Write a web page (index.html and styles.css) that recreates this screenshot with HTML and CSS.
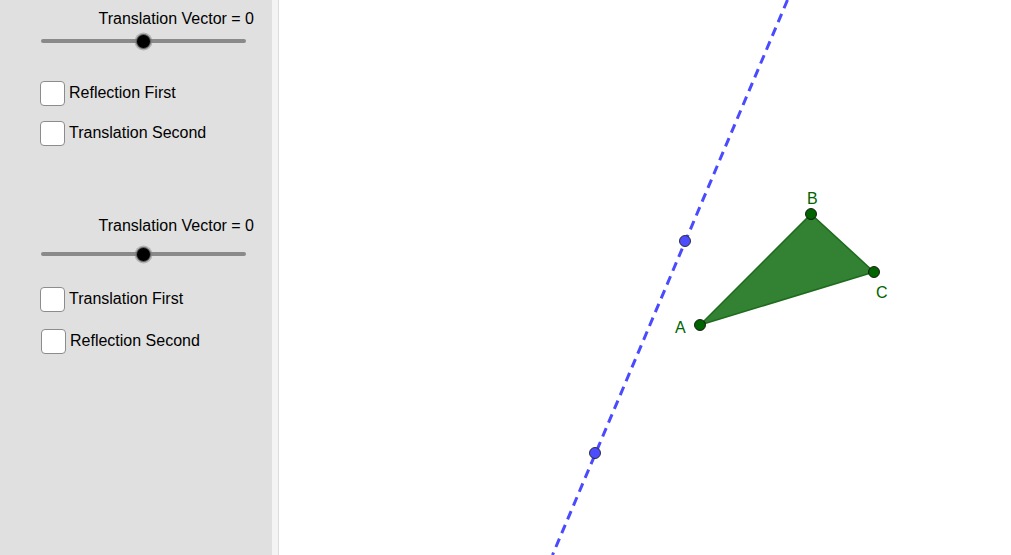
FILE: index.html
```html
<!DOCTYPE html>
<html>
<head>
<meta charset="utf-8">
<link rel="stylesheet" href="styles.css">
</head>
<body>
<div class="app">
  <aside class="panel">
    <div class="group g1">
      <div class="slabel">Translation Vector = 0</div>
      <div class="slider"><div class="track"></div><div class="knob"></div></div>
      <div class="checks">
        <label class="cb"><span class="box"></span><span>Reflection First</span></label>
        <label class="cb"><span class="box"></span><span>Translation Second</span></label>
      </div>
    </div>
    <div class="group g2">
      <div class="slabel">Translation Vector = 0</div>
      <div class="slider"><div class="track"></div><div class="knob"></div></div>
      <div class="checks">
        <label class="cb"><span class="box"></span><span>Translation First</span></label>
        <label class="cb shift"><span class="box"></span><span>Reflection Second</span></label>
      </div>
    </div>
  </aside>
  <div class="gap"></div>
  <main class="canvas">
    <svg class="plot" viewBox="279 0 732 555" width="732" height="555">
      <line x1="787.5" y1="0" x2="552.5" y2="555" stroke="#4a4aff" stroke-width="3" stroke-dasharray="9 6"/>
      <circle cx="685" cy="241" r="5.5" fill="#4d4dff" stroke="#222" stroke-width="0.9"/>
      <circle cx="595" cy="453" r="5.5" fill="#4d4dff" stroke="#222" stroke-width="0.9"/>
      <polygon points="700,325 811,214 874,272" fill="#338233" stroke="#1e6a1e" stroke-width="1.5" stroke-linejoin="round"/>
      <circle cx="700" cy="325" r="5.5" fill="#006400" stroke="#111" stroke-width="0.9"/>
      <circle cx="811" cy="214" r="5.5" fill="#006400" stroke="#111" stroke-width="0.9"/>
      <circle cx="874" cy="272" r="5.5" fill="#006400" stroke="#111" stroke-width="0.9"/>
      <text x="807" y="204" class="lbl">B</text>
      <text x="876" y="298" class="lbl">C</text>
      <text x="675" y="333" class="lbl">A</text>
    </svg>
  </main>
</div>
</body>
</html>
```
FILE: styles.css
```css
html, body {
  margin: 0;
  padding: 0;
  width: 1011px;
  height: 555px;
  overflow: hidden;
  background: #ffffff;
  font-family: "Liberation Sans", Arial, sans-serif;
}
.app {
  display: flex;
  height: 555px;
}
.panel {
  width: 272px;
  background: #e0e0e0;
  display: flex;
  flex-direction: column;
  flex: none;
}
.gap {
  width: 6px;
  background: #f4f4f4;
  border-right: 1px solid #dcdcdc;
  flex: none;
}
.canvas {
  flex: 1;
  background: #ffffff;
}
.plot {
  display: block;
}
.lbl {
  font-family: "Liberation Sans", Arial, sans-serif;
  font-size: 16px;
  fill: #006400;
}
.group {
  display: flex;
  flex-direction: column;
}
.g1 { padding-top: 10px; }
.g2 { padding-top: 71px; }
.slabel {
  font-size: 16px;
  line-height: 18px;
  color: #000;
  text-align: right;
  padding-right: 18px;
}
.slider {
  position: relative;
  height: 14px;
  margin: 6px 0 0 41px;
  width: 205px;
}
.g2 .slider { margin-top: 12px; }
.track {
  position: absolute;
  left: 0;
  right: 0;
  top: 5px;
  height: 4px;
  border-radius: 2px;
  background: #8a8a8a;
}
.knob {
  position: absolute;
  left: 95px;
  top: -0.5px;
  width: 13px;
  height: 13px;
  border-radius: 50%;
  background: #000;
  border: 1px solid #666;
  box-shadow: 0 0 0 1.5px rgba(120,120,120,0.45);
}
.checks {
  display: flex;
  flex-direction: column;
  gap: 14px;
  margin-top: 32px;
  padding-left: 40px;
}
.g2 .checks { margin-top: 25px; gap: 16px; }
.cb {
  display: flex;
  align-items: center;
  gap: 4px;
  font-size: 16px;
  color: #000;
  height: 26px;
}
.cb.shift { padding-left: 1px; }
.box {
  width: 23px;
  height: 23px;
  background: #fff;
  border: 1.5px solid #8c8c8c;
  border-radius: 4px;
  flex: none;
}
```
